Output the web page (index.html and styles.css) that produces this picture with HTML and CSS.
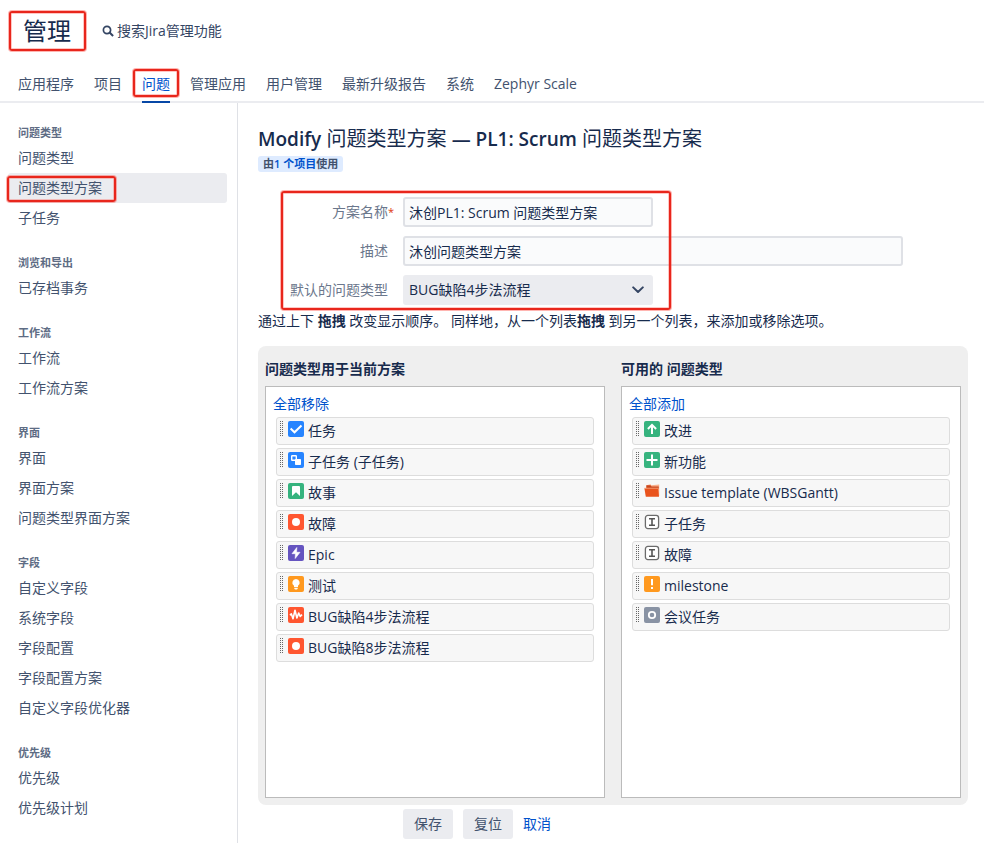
FILE: index.html
```
<!DOCTYPE html>
<html lang="zh-CN">
<head>
<meta charset="utf-8">
<meta name="viewport" content="width=device-width, initial-scale=1">
<title>管理 - 问题类型方案</title>
<link rel="stylesheet" href="styles.css">
</head>
<body>
<svg class="sprite" aria-hidden="true">
  <symbol id="i-task" viewBox="0 0 16 16"><rect width="16" height="16" rx="2" fill="#2684ff"/><path d="M2.600 7.600l3.900 3.700 7-6.800" fill="none" stroke="#fff" stroke-width="2"/></symbol>
  <symbol id="i-subtask" viewBox="0 0 16 16"><rect width="16" height="16" rx="2" fill="#2684ff"/><rect x="3.700" y="3.700" width="4.600" height="4.600" rx=".6" fill="none" stroke="#fff" stroke-width="1.400"/><rect x="7" y="7" width="6" height="6" rx=".8" fill="#fff"/></symbol>
  <symbol id="i-story" viewBox="0 0 16 16"><rect width="16" height="16" rx="2" fill="#36b37e"/><path d="M5 3h6a1 1 0 0 1 1 1v9L8 9.300 4 13V4a1 1 0 0 1 1-1z" fill="#fff"/></symbol>
  <symbol id="i-bug" viewBox="0 0 16 16"><rect width="16" height="16" rx="2" fill="#ff5630"/><circle cx="8" cy="8" r="4" fill="#fff"/></symbol>
  <symbol id="i-epic" viewBox="0 0 16 16"><rect width="16" height="16" rx="2" fill="#6554c0"/><path d="M8.800 2.500L4 8.700h3.400L7.200 13.500 12 7.300H8.600z" fill="#fff" stroke="#fff" stroke-width=".6" stroke-linejoin="round"/></symbol>
  <symbol id="i-test" viewBox="0 0 16 16"><rect width="16" height="16" rx="2" fill="#ff991f"/><path d="M8 3a3.700 3.700 0 0 0-2 6.800V11h4V9.800A3.700 3.700 0 0 0 8 3z" fill="#fff"/><path d="M6.300 11.700h3.400v1.100L9 13.400H7l-.7-.6z" fill="#fff"/></symbol>
  <symbol id="i-pulse" viewBox="0 0 16 16"><rect width="16" height="16" rx="2" fill="#ff5630"/><path d="M2 8.200l1.300-1.400 1.700 5L7 3.300 8.900 11l1.800-5 1.500 3.400L14 7.600" fill="none" stroke="#fff" stroke-width="1.600" stroke-linejoin="round"/></symbol>
  <symbol id="i-improve" viewBox="0 0 16 16"><rect width="16" height="16" rx="2" fill="#36b37e"/><path d="M8 13V4M3.900 8L8 3.900 12.100 8" fill="none" stroke="#fff" stroke-width="2"/></symbol>
  <symbol id="i-new" viewBox="0 0 16 16"><rect width="16" height="16" rx="2" fill="#36b37e"/><path d="M8 2.500v11M2.500 8h11" stroke="#fff" stroke-width="2"/></symbol>
  <symbol id="i-folder" viewBox="0 0 16 16"><path d="M2.500 4V2.200l4-1 .8 1 7.900-.6V13H3z" fill="#f9b08c"/><path d="M2.300 2.300h4.200l1 1.200h7.200V5.500H2.300z" fill="#c9461c"/><path d="M.4 5.300h13.800l.8 8.500H1.800z" fill="#e9531d"/><path d="M.4 5.200h13.800" stroke="#f9b08c" stroke-width=".7"/></symbol>
  <symbol id="i-generic" viewBox="0 0 16 16"><rect x="1.400" y="1.400" width="13.200" height="13.200" rx="2.500" fill="#fff" stroke="#6b6b6b" stroke-width="1.300"/><path d="M5 4.700h6M5 11.300h6M8 4.700v6.600" stroke="#555" stroke-width="1.600"/></symbol>
  <symbol id="i-milestone" viewBox="0 0 16 16"><rect width="16" height="16" rx="2" fill="#ff991f"/><path d="M8 3v6.300M8 11v2" stroke="#fff" stroke-width="2"/></symbol>
  <symbol id="i-meeting" viewBox="0 0 16 16"><rect width="16" height="16" rx="2" fill="#8993a4"/><circle cx="8" cy="8" r="3.200" fill="none" stroke="#fff" stroke-width="1.800"/></symbol>
</svg>

<header class="header">
  <h1 class="header-title mark mark-title">管理</h1>
  <button type="button" class="search">
    <svg class="search-icon" viewBox="0 0 12 12" aria-hidden="true"><circle cx="5" cy="5" r="3.600" fill="none" stroke="currentColor" stroke-width="1.700"/><path d="M7.600 7.600l3.500 3.500" stroke="currentColor" stroke-width="2.100"/></svg>
    搜索Jira管理功能
  </button>
</header>

<nav class="tabs">
  <a class="tab" href="#">应用程序</a>
  <a class="tab" href="#">项目</a>
  <a class="tab tab-active mark mark-tab" href="#">问题</a>
  <a class="tab" href="#">管理应用</a>
  <a class="tab" href="#">用户管理</a>
  <a class="tab" href="#">最新升级报告</a>
  <a class="tab" href="#">系统</a>
  <a class="tab" href="#">Zephyr Scale</a>
</nav>

<div class="layout">
  <aside class="sidebar">
    <section class="group">
      <h2 class="group-title">问题类型</h2>
      <a class="side-link" href="#">问题类型</a>
      <a class="side-link side-link-active mark mark-side" href="#">问题类型方案</a>
      <a class="side-link" href="#">子任务</a>
    </section>
    <section class="group">
      <h2 class="group-title">浏览和导出</h2>
      <a class="side-link" href="#">已存档事务</a>
    </section>
    <section class="group">
      <h2 class="group-title">工作流</h2>
      <a class="side-link" href="#">工作流</a>
      <a class="side-link" href="#">工作流方案</a>
    </section>
    <section class="group">
      <h2 class="group-title">界面</h2>
      <a class="side-link" href="#">界面</a>
      <a class="side-link" href="#">界面方案</a>
      <a class="side-link" href="#">问题类型界面方案</a>
    </section>
    <section class="group">
      <h2 class="group-title">字段</h2>
      <a class="side-link" href="#">自定义字段</a>
      <a class="side-link" href="#">系统字段</a>
      <a class="side-link" href="#">字段配置</a>
      <a class="side-link" href="#">字段配置方案</a>
      <a class="side-link" href="#">自定义字段优化器</a>
    </section>
    <section class="group">
      <h2 class="group-title">优先级</h2>
      <a class="side-link" href="#">优先级</a>
      <a class="side-link" href="#">优先级计划</a>
    </section>
  </aside>

  <main class="main">
    <h2 class="page-title"><b>Modify</b> 问题类型方案 <b>— PL1: Scrum</b> 问题类型方案</h2>
    <p class="usage">由<a class="link" href="#">1 个项目</a>使用</p>

    <form class="form">
      <div class="fields mark mark-form">
        <div class="field">
          <label class="label" for="name">方案名称<span class="required">*</span></label>
          <div class="control"><input class="input" id="name" type="text" value="沐创PL1: Scrum 问题类型方案"></div>
        </div>
        <div class="field">
          <label class="label" for="description">描述</label>
          <div class="control control-long"><input class="input" id="description" type="text" value="沐创问题类型方案"></div>
        </div>
        <div class="field">
          <label class="label" for="default-type">默认的问题类型</label>
          <div class="control">
            <select class="input select" id="default-type">
              <option>BUG缺陷4步法流程</option>
              <option>BUG缺陷8步法流程</option>
            </select>
            <svg class="chevron" viewBox="0 0 12 8" aria-hidden="true"><path d="M1.200 1.400L6 6l4.800-4.600" fill="none" stroke="#344563" stroke-width="2" stroke-linecap="round" stroke-linejoin="round"/></svg>
          </div>
        </div>
      </div>

      <p class="hint">通过上下 <b>拖拽</b> 改变显示顺序。 同样地，从一个列表<b>拖拽</b> 到另一个列表，来添加或移除选项。</p>

      <div class="panel">
        <section class="column">
          <h3 class="column-title">问题类型用于当前方案</h3>
          <div class="box">
            <a class="link box-link" href="#">全部移除</a>
            <ul class="list">
              <li class="item"><span class="grip"></span><svg class="icon"><use href="#i-task"/></svg><span>任务</span></li>
              <li class="item"><span class="grip"></span><svg class="icon"><use href="#i-subtask"/></svg><span>子任务 (子任务)</span></li>
              <li class="item"><span class="grip"></span><svg class="icon"><use href="#i-story"/></svg><span>故事</span></li>
              <li class="item"><span class="grip"></span><svg class="icon"><use href="#i-bug"/></svg><span>故障</span></li>
              <li class="item"><span class="grip"></span><svg class="icon"><use href="#i-epic"/></svg><span>Epic</span></li>
              <li class="item"><span class="grip"></span><svg class="icon"><use href="#i-test"/></svg><span>测试</span></li>
              <li class="item"><span class="grip"></span><svg class="icon"><use href="#i-pulse"/></svg><span>BUG缺陷4步法流程</span></li>
              <li class="item"><span class="grip"></span><svg class="icon"><use href="#i-bug"/></svg><span>BUG缺陷8步法流程</span></li>
            </ul>
          </div>
        </section>
        <section class="column">
          <h3 class="column-title">可用的 问题类型</h3>
          <div class="box">
            <a class="link box-link" href="#">全部添加</a>
            <ul class="list">
              <li class="item"><span class="grip"></span><svg class="icon"><use href="#i-improve"/></svg><span>改进</span></li>
              <li class="item"><span class="grip"></span><svg class="icon"><use href="#i-new"/></svg><span>新功能</span></li>
              <li class="item"><span class="grip"></span><svg class="icon"><use href="#i-folder"/></svg><span>Issue template (WBSGantt)</span></li>
              <li class="item"><span class="grip"></span><svg class="icon"><use href="#i-generic"/></svg><span>子任务</span></li>
              <li class="item"><span class="grip"></span><svg class="icon"><use href="#i-generic"/></svg><span>故障</span></li>
              <li class="item"><span class="grip"></span><svg class="icon"><use href="#i-milestone"/></svg><span>milestone</span></li>
              <li class="item"><span class="grip"></span><svg class="icon"><use href="#i-meeting"/></svg><span>会议任务</span></li>
            </ul>
          </div>
        </section>
      </div>

      <div class="actions">
        <button type="button" class="button">保存</button>
        <button type="button" class="button">复位</button>
        <a class="link" href="#">取消</a>
      </div>
    </form>
  </main>
</div>
</body>
</html>
```

FILE: styles.css
```
*,
*::after {
  box-sizing: border-box;
}

body {
  display: flex;
  flex-direction: column;
  min-height: 100vh;
  margin: 0;
  background: #fff;
  color: #172b4d;
  font: 14px/20px "Open Sans", "Noto Sans CJK SC", sans-serif;
}

h1, h2, h3, p, ul {
  margin: 0;
  padding: 0;
}

a {
  text-decoration: none;
}

button, input, select {
  font: inherit;
}

.sprite {
  position: absolute;
  width: 0;
  height: 0;
}

.link {
  color: #0052cc;
}

/* Red highlight frames */
.mark {
  position: relative;
}

.mark::after {
  content: "";
  position: absolute;
  border: 2px solid #e8261c;
  border-radius: 3px;
  box-shadow: 0 0 0 1px rgba(255, 70, 60, .4), inset 0 0 0 1px rgba(255, 70, 60, .3);
  pointer-events: none;
}

.mark-title::after {
  inset: -5px -15px -5px -14px;
}

.mark-tab::after {
  inset: 3px -9px 4px -9px;
}

.mark-side::after {
  inset: 3px auto 1px -1px;
  width: 109px;
}

.mark-form::after {
  inset: -6px auto -5px 23px;
  width: 390px;
}

/* Header */
.header {
  display: flex;
  align-items: center;
  gap: 31px;
  padding: 16px 23px 20px;
}

.header-title {
  font-size: 24px;
  font-weight: 400;
  line-height: 30px;
}

.search {
  display: flex;
  align-items: center;
  gap: 3px;
  padding: 0;
  border: 0;
  background: none;
  color: #344563;
}

.search-icon {
  width: 12px;
  height: 12px;
}

.tabs {
  display: flex;
  gap: 20px;
  padding: 0 18px;
  border-bottom: 2px solid #ebecf0;
}

.tab {
  margin-bottom: -2px;
  padding: 8px 0 7px;
  border-bottom: 2px solid transparent;
  color: #42526e;
  white-space: nowrap;
}

.tab-active {
  border-color: #0747a6;
  color: #0052cc;
}

/* Sidebar */
.layout {
  display: flex;
  flex: 1;
}

.sidebar {
  display: flex;
  flex: 0 0 238px;
  flex-direction: column;
  gap: 20px;
  padding: 20px 10px 20px 8px;
  border-right: 1px solid #dfe1e6;
}

.group-title {
  padding-left: 10px;
  color: #5e6c84;
  font-size: 11px;
  font-weight: 600;
  line-height: 20px;
}

.side-link {
  display: block;
  padding: 5px 10px;
  border-radius: 3px;
  color: #42526e;
}

.side-link-active {
  background: #ebecf0;
}

/* Main */
.main {
  flex: 1;
  min-width: 0;
  padding: 24px 16px 4px 20px;
}

.page-title {
  font-size: 20px;
  font-weight: 400;
  line-height: 24px;
}

.page-title b {
  font-size: 19px;
  font-weight: 600;
}

.usage {
  width: fit-content;
  margin: 5px 0 25px;
  padding: 0 5px;
  border-radius: 3px;
  background: #deebff;
  color: #42526e;
  font-size: 11px;
  font-weight: 600;
  line-height: 16px;
}

.fields {
  display: grid;
  gap: 9px;
}

.field {
  display: flex;
  gap: 15px;
}

.label {
  position: relative;
  flex: 0 0 130px;
  padding: 5px 0;
  color: #6b778c;
  text-align: right;
}

.required {
  position: absolute;
  left: 100%;
  color: #de350b;
  font-size: 11px;
}

.control {
  position: relative;
  flex: 0 1 250px;
}

.control-long {
  flex-basis: 500px;
}

.input {
  display: block;
  width: 100%;
  height: 30px;
  padding: 0 4px;
  border: 2px solid #dfe1e6;
  border-radius: 3px;
  background: #fafbfc;
  color: #172b4d;
}

.select {
  appearance: none;
  border-color: #ebecf0;
  background: #ebecf0;
}

.chevron {
  position: absolute;
  top: 11px;
  right: 9px;
  width: 12px;
  height: 8px;
  pointer-events: none;
}

.hint {
  margin: 6px 0 15px;
}

.panel {
  display: grid;
  grid-template-columns: 1fr 1fr;
  gap: 16px;
  padding: 13px 7px 7px;
  border-radius: 8px;
  background: #efefef;
}

.column {
  display: flex;
  flex-direction: column;
  gap: 7px;
}

.column-title {
  font-size: 14px;
  font-weight: 700;
  line-height: 20px;
}

.box {
  flex: 1;
  min-height: 412px;
  padding: 7px 10px;
  border: 1px solid #bbb;
  background: #fff;
}

.box-link {
  display: block;
  margin: 0 -3px;
}

.list {
  display: grid;
  gap: 3px;
  margin-top: 3px;
  list-style: none;
}

.item {
  display: flex;
  align-items: flex-start;
  height: 28px;
  padding: 3px;
  border: 1px solid #ddd;
  border-radius: 3px;
  background: #f7f7f7;
}

.item span:last-child {
  margin-left: 4px;
}

/* Dotted drag handle: vertical stripes cut by rows of the item's colour */
.grip {
  width: 3px;
  height: 16px;
  margin-right: 5px;
  background:
    linear-gradient(#f7f7f7 1px, transparent 1px) 0 1px / 2px 2px,
    linear-gradient(90deg, #666 1px, transparent 1px) 0 0 / 2px 2px;
}

.icon {
  width: 16px;
  height: 16px;
}

.actions {
  display: flex;
  align-items: center;
  gap: 10px;
  margin: 4px 0 0 145px;
}

.button {
  height: 30px;
  padding: 0 11px;
  border: 0;
  border-radius: 3px;
  background: #ebecf0;
  color: #42526e;
}
```
